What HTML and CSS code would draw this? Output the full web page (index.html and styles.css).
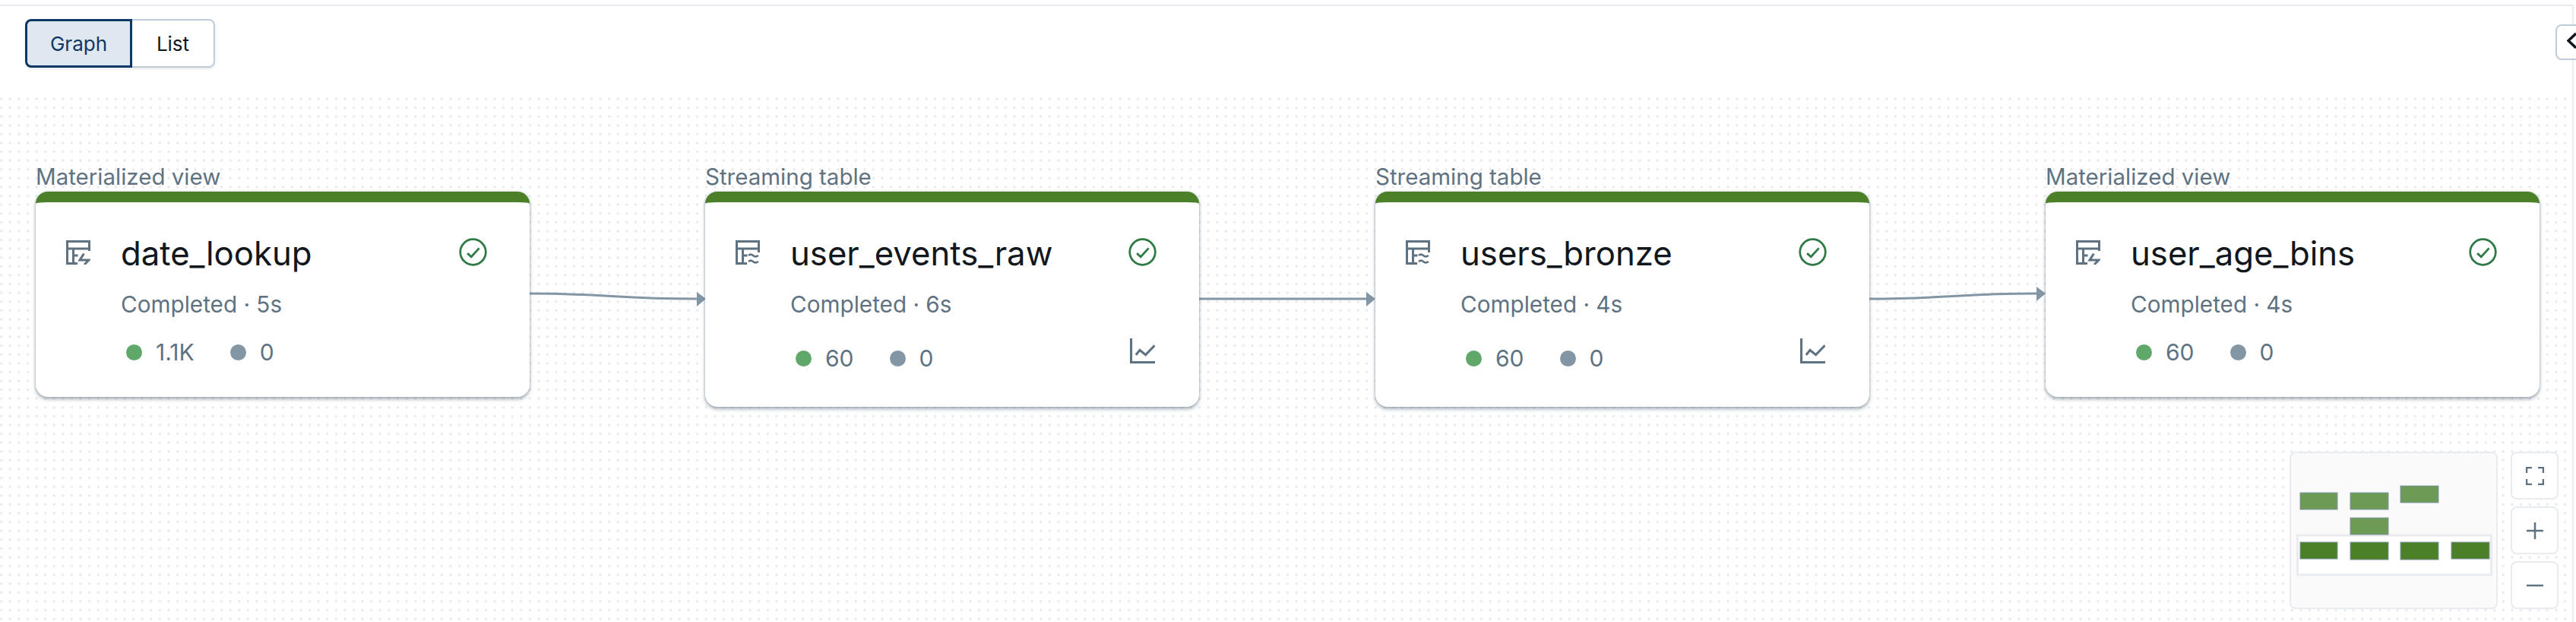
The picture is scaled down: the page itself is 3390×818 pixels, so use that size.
FILE: index.html
```html
<!DOCTYPE html>
<html lang="en">
<head>
    <meta charset="UTF-8">
    <title>Pipeline graph</title>
    <link rel="stylesheet" href="styles.css">
</head>
<body>
    <div class="panel">
        <div class="toolbar">
            <div class="view-toggle">
                <button class="toggle-btn active">Graph</button>
                <button class="toggle-btn">List</button>
            </div>
        </div>

        <button class="collapse-btn">
            <svg width="14" height="24" viewBox="0 0 14 24"><path d="M12 2 2 11.500 12 21" fill="none" stroke="#11171c" stroke-width="3.500"/></svg>
        </button>

        <div class="canvas">
            <svg class="edges" width="3385" height="696" viewBox="0 122 3385 696">
                <path d="M696 386C800 386 810 393 917 393"/>
                <polygon points="917,384 929,393 917,403"/>
                <path d="M1578 393H1798"/>
                <polygon points="1798,384 1810,393 1798,403"/>
                <path d="M2459 393C2565 393 2575 386 2680 386"/>
                <polygon points="2680,377 2692,386 2680,396"/>
            </svg>

            <div class="node node-date">
                <div class="node-type">Materialized view</div>
                <div class="card">
                    <svg class="type-icon" viewBox="0 0 16 16"><path d="M7.500 15.250H.75V.75h14.500V7M.75 5.500h14.500M4.750 5.500v9.500M4.750 10h3"/><path d="M11.700 8.800 9 13h6l-3 3"/></svg>
                    <div class="card-body">
                        <div class="node-name">date_lookup</div>
                        <div class="node-status">Completed · 5s</div>
                        <div class="stats">
                            <span class="dot green"></span><span class="stat-num">1.1K</span>
                            <span class="dot grey"></span><span class="stat-num">0</span>
                        </div>
                    </div>
                    <div class="card-side">
                        <svg class="check-icon" viewBox="0 0 16 16"><circle cx="8" cy="8" r="7.250"/><path d="M4.800 8.700 7 10.700 11.500 5.800"/></svg>
                    </div>
                </div>
            </div>

            <div class="node node-events">
                <div class="node-type">Streaming table</div>
                <div class="card tall">
                    <svg class="type-icon" viewBox="0 0 16 16"><path d="M7.500 15.250H.75V.75h14.500V8M.75 5.500h14.500M4.750 5.500v9.500M4.750 10h3"/><path class="wave" d="M8.500 10q1.500-1.300 3 0t3.500 0M8.500 14q1.500-1.300 3 0t3.500 0"/></svg>
                    <div class="card-body">
                        <div class="node-name">user_events_raw</div>
                        <div class="node-status">Completed · 6s</div>
                        <div class="stats">
                            <span class="dot green"></span><span class="stat-num">60</span>
                            <span class="dot grey"></span><span class="stat-num">0</span>
                        </div>
                    </div>
                    <div class="card-side">
                        <svg class="check-icon" viewBox="0 0 16 16"><circle cx="8" cy="8" r="7.250"/><path d="M4.800 8.700 7 10.700 11.500 5.800"/></svg>
                        <svg class="chart-icon" viewBox="0 0 16 16"><path d="M.75 0v15.250H16M3.800 10.500 6.300 7.500 10 10.500 15.800 4.500"/></svg>
                    </div>
                </div>
            </div>

            <div class="node node-bronze">
                <div class="node-type">Streaming table</div>
                <div class="card tall">
                    <svg class="type-icon" viewBox="0 0 16 16"><path d="M7.500 15.250H.75V.75h14.500V8M.75 5.500h14.500M4.750 5.500v9.500M4.750 10h3"/><path class="wave" d="M8.500 10q1.500-1.300 3 0t3.500 0M8.500 14q1.500-1.300 3 0t3.500 0"/></svg>
                    <div class="card-body">
                        <div class="node-name">users_bronze</div>
                        <div class="node-status">Completed · 4s</div>
                        <div class="stats">
                            <span class="dot green"></span><span class="stat-num">60</span>
                            <span class="dot grey"></span><span class="stat-num">0</span>
                        </div>
                    </div>
                    <div class="card-side">
                        <svg class="check-icon" viewBox="0 0 16 16"><circle cx="8" cy="8" r="7.250"/><path d="M4.800 8.700 7 10.700 11.500 5.800"/></svg>
                        <svg class="chart-icon" viewBox="0 0 16 16"><path d="M.75 0v15.250H16M3.800 10.500 6.300 7.500 10 10.500 15.800 4.500"/></svg>
                    </div>
                </div>
            </div>

            <div class="node node-bins">
                <div class="node-type">Materialized view</div>
                <div class="card">
                    <svg class="type-icon" viewBox="0 0 16 16"><path d="M7.500 15.250H.75V.75h14.500V7M.75 5.500h14.500M4.750 5.500v9.500M4.750 10h3"/><path d="M11.700 8.800 9 13h6l-3 3"/></svg>
                    <div class="card-body">
                        <div class="node-name">user_age_bins</div>
                        <div class="node-status">Completed · 4s</div>
                        <div class="stats">
                            <span class="dot green"></span><span class="stat-num">60</span>
                            <span class="dot grey"></span><span class="stat-num">0</span>
                        </div>
                    </div>
                    <div class="card-side">
                        <svg class="check-icon" viewBox="0 0 16 16"><circle cx="8" cy="8" r="7.250"/><path d="M4.800 8.700 7 10.700 11.500 5.800"/></svg>
                    </div>
                </div>
            </div>

            <div class="map-controls">
                <div class="minimap">
                    <svg width="270" height="203" viewBox="3014 596 270 203">
                        <rect class="map-view" x="3022.500" y="704" width="255" height="52"/>
                        <g class="map-node">
                            <rect x="3026" y="713" width="49" height="22"/>
                            <rect x="3092" y="713" width="50" height="23"/>
                            <rect x="3158" y="713" width="50" height="23"/>
                            <rect x="3225" y="713" width="50" height="22"/>
                        </g>
                        <g class="map-node faded">
                            <rect x="3026" y="648" width="49" height="22"/>
                            <rect x="3092" y="648" width="50" height="22"/>
                            <rect x="3158" y="639" width="50" height="22"/>
                            <rect x="3092" y="681" width="50" height="22"/>
                        </g>
                    </svg>
                </div>
                <div class="zoom-buttons">
                    <button class="zoom-btn">
                        <svg width="24" height="24" viewBox="0 0 24 24"><path d="M1 8V1h7M16 1h7v7M23 16v7h-7M8 23H1v-7"/></svg>
                    </button>
                    <button class="zoom-btn">
                        <svg width="24" height="24" viewBox="0 0 24 24"><path d="M1 12h22M12 1v22"/></svg>
                    </button>
                    <button class="zoom-btn">
                        <svg width="24" height="24" viewBox="0 0 24 24"><path d="M1 12h22"/></svg>
                    </button>
                </div>
            </div>
        </div>
    </div>
</body>
</html>
```

FILE: styles.css
```css
* {
    box-sizing: border-box;
}

html, body {
    margin: 0;
    height: 100%;
    overflow: hidden;
    background-color: #fff;
    font-family: Inter, "Liberation Sans", sans-serif;
}

.panel {
    position: relative;
    width: 3387px;
    height: 818px;
    margin-top: 6px;
    border-top: 2px solid #e8ecf0;
    border-right: 2px solid #e8ecf0;
}

.toolbar {
    height: 114px;
    padding: 17px 33px;
}

.view-toggle {
    display: flex;
    width: 250px;
    height: 64px;
    border-radius: 8px;
    box-shadow: 0 2px 3px rgba(95, 114, 129, 0.15);
}

.toggle-btn {
    flex: 1;
    padding: 0;
    font-family: inherit;
    font-size: 26px;
    color: #11171c;
    background-color: #fff;
    border: 2px solid #c0cdd8;
    border-left: none;
    border-radius: 0 8px 8px 0;
}

.toggle-btn.active {
    flex: none;
    width: 141px;
    color: #0e3864;
    background-color: #dfe7f1;
    border: 3px solid #0e3864;
    border-radius: 8px 0 0 8px;
}

.collapse-btn {
    position: absolute;
    top: 24px;
    right: -30px;
    width: 52px;
    height: 47px;
    padding: 0 0 0 13px;
    text-align: left;
    background-color: #fff;
    border: 2px solid #c0cdd8;
    border-radius: 8px;
    z-index: 2;
}

.canvas {
    position: relative;
    height: 696px;
    background-color: #fff;
    background-image: radial-gradient(circle, #e6eaee 1.4px, transparent 1.8px);
    background-size: 11.6px 11.6px;
    background-position: -4.1px 2.2px;
}

.edges {
    position: absolute;
    top: 0;
    left: 0;
}

.edges path {
    fill: none;
    stroke: #8396a5;
    stroke-width: 3;
}

.edges polygon {
    fill: #8396a5;
}

/* nodes sit on the free canvas */
.node {
    position: absolute;
    top: 92px;
    width: 650px;
}

.node-date { left: 47px; }
.node-events { left: 928px; }
.node-bronze { left: 1810px; }
.node-bins { left: 2692px; }

.node-type {
    height: 38px;
    line-height: 36px;
    font-size: 29.500px;
    color: #5f7281;
}

.card {
    display: flex;
    height: 270px;
    padding: 48px 0 0 40px;
    background-color: #fff;
    border-top: 14px solid #4b8029;
    border-radius: 16px;
    box-shadow: 0 3px 5px rgba(95, 114, 129, 0.55), 0 0 3px rgba(95, 114, 129, 0.35);
}

.card.tall {
    height: 283px;
}

.type-icon {
    flex: none;
    width: 32px;
    height: 32px;
    margin-top: 2px;
    fill: none;
    stroke: #5f7281;
    stroke-width: 1.500;
}

.type-icon .wave {
    stroke-width: 1.300;
}

.card-body {
    flex: 1;
    margin-left: 40px;
    margin-top: -10px;
}

.node-name {
    height: 60px;
    line-height: 60px;
    font-size: 43.700px;
    color: #11171c;
}

.node-status {
    margin-top: 18px;
    line-height: 36px;
    font-size: 29.700px;
    color: #5f7281;
}

.stats {
    display: flex;
    align-items: center;
    height: 36px;
    margin-top: 27px;
    padding-left: 7px;
    font-size: 30px;
    color: #5f7281;
}

.card.tall .stats {
    margin-top: 35px;
}

.dot {
    width: 21px;
    height: 21px;
    border-radius: 50%;
}

.dot.green { background-color: #5fa86a; }
.dot.grey { background-color: #8396a5; }

.stat-num {
    margin-left: 18px;
    margin-right: 47px;
}

.card-side {
    flex: none;
    display: flex;
    flex-direction: column;
    align-items: center;
    width: 36px;
    margin: -1px 57px 0 0;
}

.check-icon {
    width: 37px;
    height: 37px;
    flex: none;
    fill: none;
    stroke: #2f7a45;
    stroke-width: 1.200;
}

.chart-icon {
    width: 33px;
    height: 33px;
    flex: none;
    margin-top: 95px;
    fill: none;
    stroke: #5f7281;
    stroke-width: 1.500;
}

.map-controls {
    position: absolute;
    right: 18px;
    bottom: 17px;
    display: flex;
    gap: 17px;
}

.minimap {
    width: 274px;
    height: 207px;
    background-color: #fafafa;
    border: 2px solid #e8ecf0;
    border-radius: 8px;
}

.minimap svg {
    display: block;
}

.map-view {
    fill: #fff;
    stroke: #e8ecf0;
    stroke-width: 3;
}

.map-node rect {
    fill: #4b8029;
    stroke: #8396a5;
    stroke-width: 1;
}

.map-node.faded rect {
    fill: #6d9a55;
}

.zoom-buttons {
    display: flex;
    flex-direction: column;
    gap: 9px;
}

.zoom-btn {
    display: flex;
    justify-content: center;
    align-items: center;
    width: 63px;
    height: 63px;
    padding: 0;
    background-color: #fff;
    border: 2px solid #e8ecf0;
    border-radius: 8px;
}

.zoom-btn path {
    fill: none;
    stroke: #5f7281;
    stroke-width: 2.500;
}
```
